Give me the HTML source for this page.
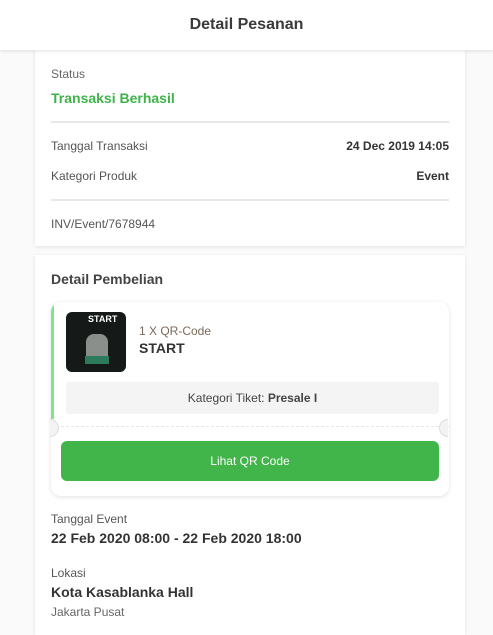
<!DOCTYPE html>
<html><head><meta charset="utf-8"><style>
*{box-sizing:border-box;margin:0;padding:0}
body{width:493px;height:625px;overflow:hidden;background:#fafafa;font-family:"Liberation Sans",sans-serif;color:#333;position:relative}
.hdr{position:absolute;top:0;left:0;width:493px;height:50px;background:#fff;box-shadow:0 1px 4px rgba(0,0,0,.12);z-index:2;text-align:center;font-weight:bold;font-size:16px;line-height:50px;color:#3a3a3a}
.card{position:absolute;left:35px;width:430px;background:#fff;box-shadow:0 1px 4px rgba(0,0,0,.1)}
.t{position:absolute;font-size:12px;color:#555}
.b{font-weight:bold;color:#333}
.hr{position:absolute;left:16px;right:16px;height:2px;background:#e8e8e8}
</style></head><body>
<div class="hdr">Detail Pesanan</div>
<div class="card" style="top:50px;height:196px">
<div class="t" style="left:16px;top:17px;color:#666">Status</div>
<div class="t" style="left:16px;top:40px;font-size:14px;font-weight:bold;color:#3fb34a">Transaksi Berhasil</div>
<div class="hr" style="top:71px"></div>
<div class="t" style="left:16px;top:89px">Tanggal Transaksi</div>
<div class="t b" style="right:16px;top:89px">24 Dec 2019 14:05</div>
<div class="t" style="left:16px;top:119px">Kategori Produk</div>
<div class="t b" style="right:16px;top:119px">Event</div>
<div class="hr" style="top:149px"></div>
<div class="t" style="left:16px;top:167px">INV/Event/7678944</div>
</div>
<div class="card" style="top:255px;height:380px">
<div class="t" style="left:16px;top:16px;font-size:14px;font-weight:bold;color:#444">Detail Pembelian</div>
<div style="position:absolute;left:16px;top:47px;width:398px;height:194px;background:#fff;border-radius:10px;box-shadow:0 1px 5px rgba(0,0,0,.12);overflow:hidden">
<div style="position:absolute;left:0;top:0;width:3px;height:117px;background:#7de58a"></div>
<div style="position:absolute;left:15px;top:10px;width:60px;height:60px;border-radius:6px;background:#151a18;overflow:hidden">
<div style="position:absolute;left:22px;top:2px;color:#fff;font-size:9px;font-weight:bold">START</div>
<div style="position:absolute;left:20px;top:22px;width:22px;height:28px;background:#8a8f8c;border-radius:8px 8px 0 0"></div>
<div style="position:absolute;left:19px;top:44px;width:24px;height:8px;background:#2e7a5c"></div></div>
<div class="t" style="left:88px;top:22px;color:#7a6a5a">1 X QR-Code</div>
<div class="t b" style="left:88px;top:38px;font-size:14px">START</div>
<div style="position:absolute;left:15px;top:80px;width:373px;height:32px;background:#f4f4f4;border-radius:3px;text-align:center;line-height:32px;font-size:12px;color:#444">Kategori Tiket: <b>Presale I</b></div>
<div style="position:absolute;left:0;right:0;top:124px;border-top:1px dashed #e6e6e6"></div>
<div style="position:absolute;left:10px;top:139px;width:378px;height:40px;background:#41b54a;border-radius:6px;text-align:center;line-height:40px;color:#fff;font-size:12px">Lihat QR Code</div>
</div>
<div style="position:absolute;left:6px;top:164px;width:18px;height:18px;border-radius:50%;background:#f3f3f3;border:1px solid #ddd;clip-path:inset(0 0 0 9px)"></div>
<div style="position:absolute;left:404px;top:164px;width:18px;height:18px;border-radius:50%;background:#f3f3f3;border:1px solid #ddd;clip-path:inset(0 9px 0 0)"></div>
<div class="t" style="left:16px;top:257px">Tanggal Event</div>
<div class="t b" style="left:16px;top:275px;font-size:14px">22 Feb 2020 08:00 - 22 Feb 2020 18:00</div>
<div class="t" style="left:16px;top:311px">Lokasi</div>
<div class="t b" style="left:16px;top:329px;font-size:14px">Kota Kasablanka Hall</div>
<div class="t" style="left:16px;top:350px;color:#666">Jakarta Pusat</div>
</div>
</body></html>
